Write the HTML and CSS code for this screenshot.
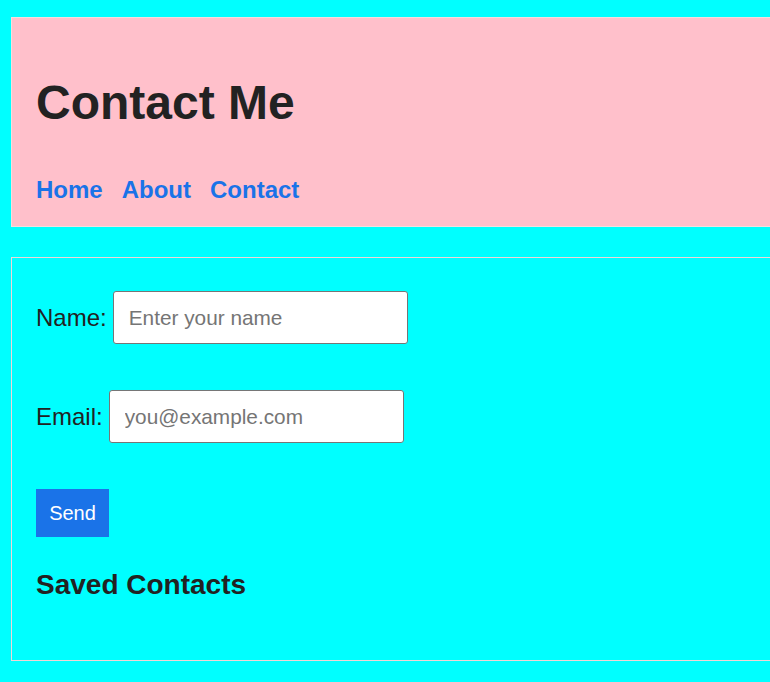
FILE: index.html
```html
<!DOCTYPE html>
<html lang="en">
<head>
<meta charset="utf-8">
<title>Contact Me</title>
<link rel="stylesheet" href="styles.css">
</head>
<body>
<header class="site-header">
  <h1 class="title">Contact Me</h1>
  <nav class="nav">
    <a href="#" class="nav-link">Home</a>
    <a href="#" class="nav-link">About</a>
    <a href="#" class="nav-link">Contact</a>
  </nav>
</header>
<section class="panel">
  <form class="form">
    <div class="row">
      <label class="label" for="name">Name:</label>
      <input class="field" id="name" type="text" placeholder="Enter your name">
    </div>
    <div class="row">
      <label class="label" for="email">Email:</label>
      <input class="field" id="email" type="email" placeholder="you@example.com">
    </div>
    <div class="row">
      <button class="btn" type="button">Send</button>
    </div>
  </form>
  <h2 class="subtitle">Saved Contacts</h2>
</section>
</body>
</html>
```
FILE: styles.css
```css
html, body {
  margin: 0;
  overflow: hidden;
}
body {
  background: #00ffff;
  color: #222;
  font-family: "Liberation Sans", Arial, sans-serif;
  padding: 17px 0 0 11px;
}
.site-header {
  background: #ffc0cb;
  border: 1px solid #f4dede;
  padding: 24px 24px 22px;
  margin-right: -1px;
}
.title {
  font-size: 48px;
  line-height: 56px;
  font-weight: bold;
  margin: 33px 0 45px;
}
.nav {
  display: flex;
  gap: 19px;
  font-size: 24px;
  line-height: 28px;
}
.nav-link {
  color: #1a73e8;
  font-weight: bold;
  text-decoration: none;
}
.panel {
  margin-top: 30px;
  margin-right: -1px;
  border: 1px solid #f2d6d6;
  padding: 24px;
}
.form {
  display: flex;
  flex-direction: column;
  gap: 46px;
  padding-top: 9px;
}
.row {
  display: flex;
  align-items: center;
  gap: 6px;
  height: 53px;
}
.row:last-child {
  height: 48px;
}
.label {
  font-size: 24px;
  line-height: 28px;
}
.field {
  box-sizing: border-box;
  width: 295px;
  height: 53px;
  padding: 0 15px;
  border: 1px solid #767676;
  border-radius: 3px;
  background: #fff;
  font-family: "Liberation Sans", Arial, sans-serif;
  font-size: 20.8px;
  color: #222;
}
.field::placeholder {
  color: #757575;
}
.btn {
  box-sizing: border-box;
  height: 48px;
  width: 73px;
  padding: 0;
  border: none;
  background: #1a73e8;
  color: #fff;
  font-family: "Liberation Sans", Arial, sans-serif;
  font-size: 20px;
}
.subtitle {
  font-size: 28px;
  line-height: 32px;
  font-weight: bold;
  margin: 32px 0 35px;
}
```
